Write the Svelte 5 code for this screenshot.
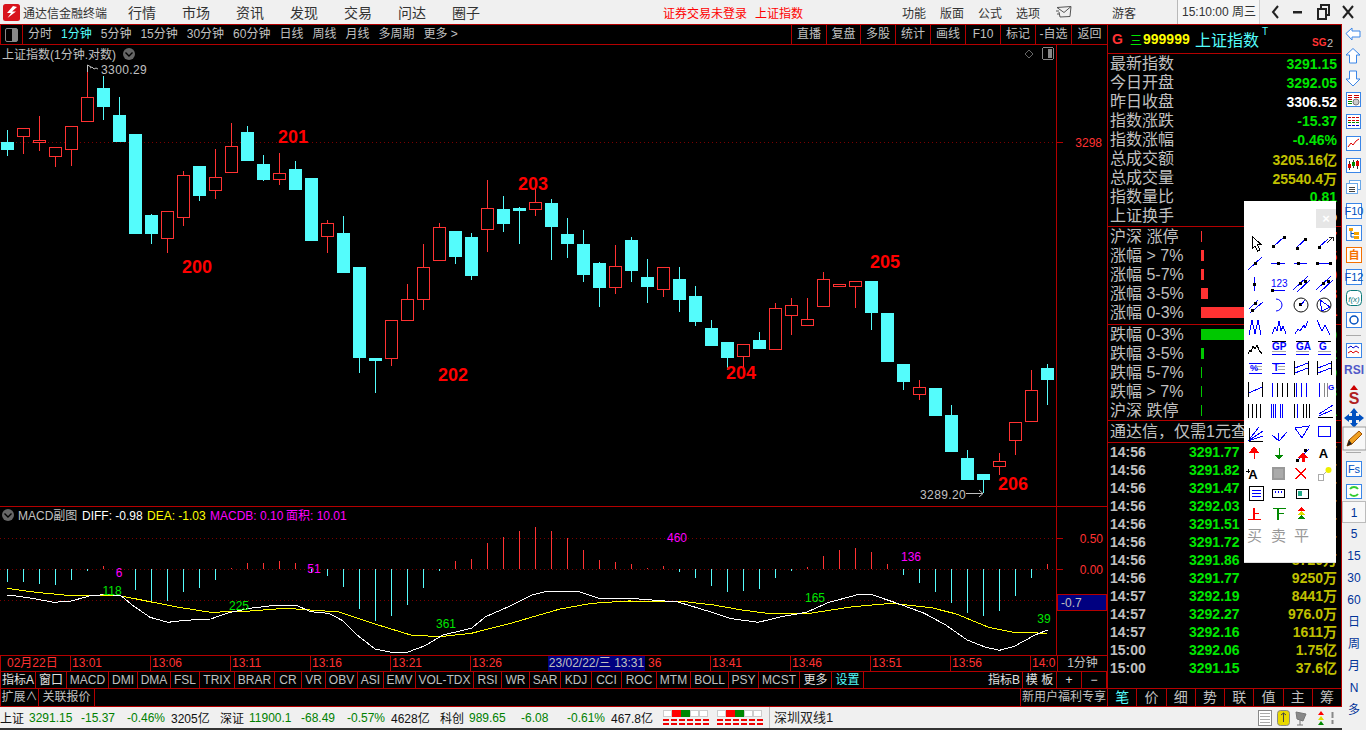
<script>
	const menus = ['行情', '市场', '资讯', '发现', '交易', '问达', '圈子'];
	const sysMenus = ['功能', '版面', '公式', '选项'];
	const periods = [
		['分时', 0], ['1分钟', 1], ['5分钟', 0], ['15分钟', 0], ['30分钟', 0], ['60分钟', 0],
		['日线', 0], ['周线', 0], ['月线', 0], ['多周期', 0], ['更多 >', 0]
	];
	const actions = [['直播', 35], ['复盘', 34], ['多股', 35], ['统计', 35], ['画线', 35], ['F10', 35], ['标记', 35], ['-自选', 36], ['返回', 36]];

	// [red?, wick high, body top, body bottom, wick low]
	const candles = [
		[0,130,142,150,156],[1,128,128,137,154],[1,116,140,143,151],[1,147,147,157,167],[1,126,126,150,166],
		[1,65,97,122,122],[0,76,88,107,120],[0,97,115,142,142],[0,134,134,234,234],[0,214,215,234,244],
		[1,211,211,239,253],[1,171,175,218,226],[0,166,166,196,201],[1,149,177,191,199],[1,123,146,173,173],
		[0,126,132,161,161],[0,155,164,180,181],[1,153,173,180,185],[0,161,169,190,190],[0,178,178,241,241],
		[1,220,223,237,253],[0,216,233,273,273],[0,267,267,358,373],[0,358,358,361,393],[1,320,320,359,366],
		[1,284,299,321,321],[1,244,267,300,310],[1,223,227,261,261],[0,231,231,257,264],[0,233,237,276,280],
		[1,180,208,230,252],[0,196,209,224,232],[0,207,208,211,244],[1,189,202,210,216],[0,199,203,227,260],
		[0,218,234,244,258],[0,230,244,275,282],[0,262,263,288,307],[1,245,266,288,294],[0,237,240,271,282],
		[0,259,277,287,303],[1,267,267,290,297],[0,267,279,300,312],[0,286,296,322,326],[0,320,328,346,346],
		[0,342,342,358,370],[1,344,344,357,370],[0,332,340,349,349],[1,303,308,350,350],[1,298,305,316,335],
		[1,298,319,326,326],[1,272,279,307,307],[1,284,284,287,287],[1,281,281,287,308],[0,281,281,313,330],
		[0,313,313,362,362],[0,364,364,382,390],[1,380,387,395,400],[0,388,388,416,416],[0,405,415,452,452],
		[0,450,458,480,480],[0,474,474,480,493],[1,453,461,467,475],[1,422,422,441,455],[1,370,390,422,422],
		[0,364,368,380,405]
	];

	// tip of each histogram bar, one per candle column
	const bars = [
		582,582,584,585,580,571,566,569,590,601,601,592,588,580,568,563,563,561,563,573,576,587,609,621,616,605,588,
		571,561,559,543,537,531,527,531,538,550,560,562,564,568,566,572,578,586,592,591,589,578,571,567,556,550,548,
		552,564,575,583,592,603,613,616,611,596,578,564
	];

	const fromZoomA = (p) => `${(p[0] / 2.8).toFixed(1)},${(500 + p[1] / 3).toFixed(1)}`;
	const fromZoomB = (p) => `${(560 + p[0] / 2.8).toFixed(1)},${(500 + p[1] / 3).toFixed(1)}`;
	const diff = [
		...[[20,286],[45,288],[90,295],[150,307],[200,303],[250,288],[300,283],[340,288],[370,315],[420,352],[470,367],[520,361],[590,357],[640,338],[700,325],[770,316],[830,316],[870,335],[920,340],[960,362],[1000,405],[1050,447],[1100,458],[1140,457],[1190,437],[1240,405],[1320,385],[1360,350],[1420,322],[1490,285],[1530,274]].map(fromZoomA),
		...[[0,274],[50,274],[110,295],[210,296],[330,306],[420,335],[480,356],[555,367],[620,350],[690,337],[750,308],[830,285],[870,283],[950,312],[1020,340],[1080,375],[1140,420],[1190,441],[1230,451],[1270,440],[1330,405],[1365,390]].map(fromZoomB)
	].join(' ');
	const dea = [
		...[[20,265],[100,277],[200,287],[340,288],[420,305],[500,322],[590,337],[700,333],[800,325],[950,336],[1050,372],[1150,405],[1230,410],[1320,400],[1430,370]].map(fromZoomA),
		...[[0,327],[90,310],[190,303],[340,304],[430,315],[510,330],[580,340],[700,340],[820,320],[930,310],[1040,323],[1110,342],[1200,382],[1270,397],[1365,400]].map(fromZoomB)
	].join(' ');

	const marks = [['200',197,273],['201',293,143],['202',453,381],['203',533,190],['204',741,379],['205',885,268],['206',1013,490]];
	const macdCounts = [['6',119,577,'m'],['51',314,573,'m'],['460',677,542,'m'],['136',911,561,'m'],['118',112,595,'g'],['225',239,610,'g'],['361',446,628,'g'],['165',815,602,'g'],['39',1044,623,'g']];

	const times = ['13:01','13:06','13:11','13:16','13:21','13:26','','36','13:41','13:46','13:51','13:56','14:0'];

	const tabsLeft = [
		['指标A',35,1],['窗口',31,1],['MACD',42],['DMI',29],['DMA',33],['FSL',29],['TRIX',35],['BRAR',40],['CR',27],['VR',24],
		['OBV',32],['ASI',26],['EMV',32],['VOL-TDX',58],['RSI',28],['WR',28],['SAR',31],['KDJ',31],['CCI',30],['ROC',35],
		['MTM',34],['BOLL',38],['PSY',30],['MCST',41],['更多',32,1]
	];

	const stats = [
		['最新指数','3291.15','g'],['今日开盘','3292.05','g'],['昨日收盘','3306.52','w'],['指数涨跌','-15.37','g'],['指数涨幅','-0.46%','g'],
		['总成交额','3205.16亿','y'],['总成交量','25540.4万','y'],['指数量比','0.81','g'],['上证换手','0.55%','w']
	];
	const rises = [['沪深 涨停',1,'7'],['涨幅 > 7%',3,'25'],['涨幅 5-7%',3,'30'],['涨幅 3-5%',7,'98'],['涨幅 0-3%',100,'914']];
	const falls = [['跌幅 0-3%',100,'3410'],['跌幅 3-5%',3,'62'],['跌幅 5-7%',1,'9'],['跌幅 > 7%',1,'3'],['沪深 跌停',1,'1']];
	const ticks = [
		['14:56','3291.77','9120万'],['14:56','3291.82','8830万'],['14:56','3291.47','7651万'],['14:56','3292.03','8120万'],['14:56','3291.51','6640万'],
		['14:56','3291.72','9032万'],['14:56','3291.86','8720万'],['14:56','3291.77','9250万'],['14:57','3292.19','8441万'],['14:57','3292.27','976.0万'],
		['14:57','3292.16','1611万'],['15:00','3292.06','1.75亿'],['15:00','3291.15','37.6亿']
	];
	const quoteTabs = ['笔','价','细','势','联','值','主','筹'];
	const railPeriods = ['1','5','15','30','60','日','周','月','N','多'];

	const market = [
		['上证','3291.15','-15.37','-0.46%','3205亿'],
		['深证','11900.1','-68.49','-0.57%','4628亿'],
		['科创','989.65','-6.08','-0.61%','467.8亿']
	];
</script>

<div class="app">
	<header class="title">
		<svg class="logo" width="17" height="17" viewBox="0 0 17 17">
			<rect width="17" height="17" rx="2.5" fill="#d8141c" />
			<path d="M10 2 L4 9 L8 9 L4.5 14 L13 7.5 L9 7.5 L14 3 Z" fill="#fff" />
		</svg>
		<span class="app-name">通达信金融终端</span>
		<nav class="menu">
			{#each menus as m}<span>{m}</span>{/each}
		</nav>
		<span class="notice">证券交易未登录</span>
		<span class="notice index">上证指数</span>
		<nav class="sys">
			{#each sysMenus as m}<span>{m}</span>{/each}
		</nav>
		<svg class="mail" width="16" height="12" viewBox="0 0 16 12">
			<path d="M1 1.5 L15 .5 L14 10.5 L4 11 L3 6 M1 1.5 L8 6.5 L15 .5 M0 5 H3 M1 8 H3" fill="none" stroke="#555" />
		</svg>
		<span class="guest">游客</span>
		<span class="clock">15:10:00 周三</span>
		<svg class="win" width="92" height="24" viewBox="0 0 92 24">
			<path d="M14 6 L9 12 L14 18" fill="none" stroke="#222" stroke-width="2" />
			<rect x="29" y="11" width="9" height="2.5" fill="#222" />
			<path d="M54 9 H62 V19 H54 Z M57 9 V5 H65 V15 H62" fill="none" stroke="#222" stroke-width="2" />
			<path d="M89 6 L79 18 M79 6 L89 18" fill="none" stroke="#222" stroke-width="2" />
		</svg>
	</header>

	<div class="work">
		<section class="left">
			<div class="toolbar">
				<div class="layout-btn"><i></i></div>
				<div class="periods">
					{#each periods as p}<span class:on={p[1]}>{p[0]}</span>{/each}
				</div>
				<div class="actions">
					{#each actions as a}<span style="width:{a[1]}px">{a[0]}</span>{/each}
				</div>
			</div>

			<svg class="chart" width="1107" height="461" viewBox="0 45 1107 461" shape-rendering="crispEdges">
				<line x1="0" x2="1057" y1="142.5" y2="142.5" class="dots" />
				<line x1="1056.5" x2="1056.5" y1="45" y2="506" class="frame" />
				<line x1="1057" x2="1063" y1="142.5" y2="142.5" class="frame" />
				{#each candles as c, i}
					{@const x = 7 + 16 * i}
					<line x1={x + 0.5} x2={x + 0.5} y1={c[1]} y2={c[4]} stroke={c[0] ? '#ff3232' : '#54fcfc'} />
					{#if c[0]}
						<rect x={x - 5.5} y={c[2] + 0.5} width="12" height={c[3] - c[2] - 1} fill="#000" stroke="#ff3232" />
					{:else}
						<rect x={x - 6} y={c[2]} width="13" height={c[3] - c[2]} fill="#54fcfc" />
					{/if}
				{/each}
				<text x="2" y="59" class="t-grey">上证指数(1分钟.对数)</text>
				<circle cx="129" cy="54" r="6" fill="#666" shape-rendering="auto" />
				<path d="M125.5 52.5 L129 56 L132.5 52.5" fill="none" stroke="#000" stroke-width="1.4" shape-rendering="auto" />
				<path d="M87.5 65 V72 M87.5 65 L91 67 M90 68 L92 67 L94 69 L96 68 L98 69" fill="none" stroke="#c0c0c0" shape-rendering="auto" />
				<text x="101" y="74" class="t-grey num">3300.29</text>
				<text x="920" y="499" class="t-grey num">3289.20</text>
				<path d="M966 493.5 H983 M979 490 L983 493.5 L979 497" fill="none" stroke="#c0c0c0" shape-rendering="auto" />
				{#each marks as m}
					<text x={m[1]} y={m[2]} class="mark" text-anchor="middle">{m[0]}</text>
				{/each}
				<path d="M1029 50 L1033 54 L1029 58 L1025 54 Z" fill="none" stroke="#666" shape-rendering="auto" />
				<rect x="1042.5" y="47.5" width="11" height="12" rx="2" fill="#000" stroke="#888" />
				<rect x="1048" y="49" width="4" height="9" fill="#888" />
				<text x="1102" y="147" class="t-red" text-anchor="end">3298</text>
			</svg>

			<svg class="macd" width="1107" height="148" viewBox="0 507 1107 148" shape-rendering="crispEdges">
				<line x1="0" x2="1057" y1="538.5" y2="538.5" class="dots" />
				<line x1="0" x2="1057" y1="569.5" y2="569.5" class="dots" />
				<line x1="0" x2="1057" y1="600.5" y2="600.5" class="dots" />
				{#each bars as tip, i}
					{@const x = 7.5 + 16 * i}
					<line x1={x} x2={x} y1="569" y2={tip} stroke={tip < 569 ? '#ff3232' : '#54fcfc'} />
				{/each}
				<polyline points={dea} class="dea" />
				<polyline points={diff} class="diff" />
				{#each macdCounts as c}
					<text x={c[1]} y={c[2]} class="count {c[3]}" text-anchor="middle">{c[0]}</text>
				{/each}
				<circle cx="8" cy="515" r="6" fill="#666" shape-rendering="auto" />
				<path d="M4.5 513.5 L8 517 L11.5 513.5" fill="none" stroke="#000" stroke-width="1.4" shape-rendering="auto" />
				<text x="18" y="520" class="t-grey">MACD副图</text>
				<text x="82" y="520" class="t-white">DIFF: -0.98</text>
				<text x="147" y="520" class="t-yellow">DEA: -1.03</text>
				<text x="210" y="520" class="t-magenta">MACDB: 0.10</text>
				<text x="286" y="520" class="t-magenta">面积: 10.01</text>
				<rect x="1056" y="507" width="51" height="148" fill="#000" />
				<line x1="1056.5" x2="1056.5" y1="507" y2="655" class="frame" />
				<line x1="1057" x2="1063" y1="538.5" y2="538.5" class="frame" />
				<line x1="1057" x2="1063" y1="569.5" y2="569.5" class="frame" />
				<text x="1103" y="543" class="t-red" text-anchor="end">0.50</text>
				<text x="1103" y="574" class="t-red" text-anchor="end">0.00</text>
				<rect x="1057" y="594.5" width="49" height="16" fill="#000080" stroke="#b40000" />
				<text x="1061" y="607" class="t-grey">-0.7</text>
			</svg>

			<div class="axis">
				<span class="date">02月22日</span>
				{#each times as t}<span class="time" class:tail={t === '36'}>{t}</span>{/each}
				<span class="stamp">23/02/22/三 13:31</span>
				<span class="unit">1分钟</span>
			</div>

			<div class="tabs">
				{#each tabsLeft as t}<span class:bright={t[2]} style="width:{t[1]}px">{t[0]}</span>{/each}
				<span class="cyan" style="width:32px">设置</span>
				<span class="grow"></span>
				<span class="bright" style="width:37px">指标B</span>
				<span class="bright" style="width:34px">模 板</span>
				<span class="bright" style="width:25px">+</span>
				<span class="bright" style="width:25px">−</span>
			</div>

			<div class="extra">
				<span style="width:38px">扩展∧</span>
				<span style="width:56px">关联报价</span>
				<span class="grow"></span>
				<span class="promo">新用户福利专享</span>
			</div>
		</section>

		<section class="quote">
			<div class="q-head">
				<span class="g">G</span>
				<span class="bars">三</span>
				<span class="code">999999</span>
				<span class="name">上证指数</span>
				<sup>T</sup>
				<span class="sg">SG</span>
				<span class="two">2</span>
			</div>
			<div class="q-block first">
				{#each stats as s}
					<div class="row"><span class="label">{s[0]}</span><b class={s[2]}>{s[1]}</b></div>
				{/each}
			</div>
			<div class="q-block rises">
				{#each rises as r}
					<div class="row meter"><span class="label">{r[0]}</span><i class="up" style="width:{r[1]}px"></i><b class="r">{r[2]}</b></div>
				{/each}
			</div>
			<div class="q-block">
				{#each falls as r}
					<div class="row meter"><span class="label">{r[0]}</span><i class="down" style="width:{r[1]}px"></i><b class="g">{r[2]}</b></div>
				{/each}
			</div>
			<div class="news">通达信，仅需1元查看主力资金</div>
			<div class="ticks">
				{#each ticks as t}
					<div class="tick"><b class="when">{t[0]}</b><b class="price">{t[1]}</b><b class="vol">{t[2]}</b></div>
				{/each}
			</div>
			<div class="q-tabs">
				{#each quoteTabs as t, i}<span class:cyan={i === 0}>{t}</span>{/each}
			</div>

			<div class="palette">
				<div class="close">×</div>
				<svg width="92" height="361" viewBox="1244 201 92 361" shape-rendering="crispEdges">
					<g class="k w"><path d="M1252 236 V249 L1255 246 L1257.5 251 L1260 250 L1257.5 245 L1261 244.5 Z" /></g>
					<g class="b">
						<path d="M1273 247 L1284 237 M1296 248 L1307 238 M1319 247 L1328 239" />
						<path d="M1248 270 L1262 257 M1271 263 H1285 M1294 263 H1307 M1317 263 H1331" />
						<path d="M1254 277 V291 M1272 290 H1285" />
						<path d="M1293 290 L1308 276 M1297 292 L1310 280" />
						<path d="M1316 290 L1331 276 M1320 292 L1333 280" />
						<path d="M1250 313 L1263 302 M1249 309 L1258 300" />
						<path d="M1276 299 A6 6 0 0 1 1276 311" shape-rendering="auto" />
						<path d="M1249 335 L1252 320 L1255 334 L1258 320 L1261 335" />
						<path d="M1272 334 L1275 327 L1277 331 L1279 321 L1281 331 L1283 326 L1286 334" />
						<path d="M1295 334 L1298 329 L1300 331 L1304 325 L1305 328 L1308 321" />
						<path d="M1317 320 L1322 331 L1325 325 L1330 335" />
						<path d="M1249 363.5 H1262 M1249 373.5 H1262 M1272 363.5 H1285 M1272 373.5 H1285" />
						<path d="M1272 354.5 H1286 M1296 354.5 H1309 M1318 354.5 H1331" />
						<path d="M1295 368 L1308 363 M1295 373 L1308 368 M1318 368 L1331 363 M1318 373 L1331 368" />
						<path d="M1249 393 L1262 387 M1272.5 383 V397 M1296 383 V397 M1301 383 V397 M1306 383 V397 M1319 383 V397" />
						<path d="M1271.5 404 V418 M1273.5 404 V418 M1275.5 404 V418 M1280 404 V418 M1282 404 V418 M1297 404 V418 M1319 414 L1333 405 M1319 416 L1332 410" />
						<path d="M1248 441 L1259 427 M1248 441 L1263 431 M1248 441 L1263 436" />
						<path d="M1279 433 L1278 441 M1279 441 L1272 435 M1279 441 L1287 432" />
						<path d="M1295 428 L1309 426 L1302 438 Z" />
						<rect x="1318.5" y="426.5" width="12" height="10" />
						<path d="M1296 462 L1309 449" />
						<path d="M1252 490.5 H1261 M1252 493.5 H1261 M1252 496.5 H1261" />
					</g>
					<g class="k">
						<path d="M1294 361 V375 M1308 361 V375 M1317 361 V375 M1331 361 V375" />
						<path d="M1248.5 382 V397 M1262.5 382 V397 M1277 383 V397 M1282 383 V397 M1287 383 V397 M1294 383 V397" />
						<path d="M1248 404 V418 M1252 404 V418 M1256 404 V418 M1260 404 V418" />
						<path d="M1294 404 V418 M1303 404 V418 M1306 404 V418 M1309 404 V418 M1318 417 H1333" />
						<path d="M1249 428 V441 H1263" />
						<path d="M1248 354 L1250 350 L1251 352 L1253 346 L1255 349 L1257 345 L1259 350 L1262 354" />
						<path d="M1272 341.5 H1286 M1296 341.5 H1309 M1318 341.5 H1331" />
						<rect x="1249.5" y="486.5" width="14" height="14" />
						<rect x="1272.5" y="489.5" width="12" height="8" />
						<path d="M1275 491 V493 M1278 491 V493 M1281 491 V493" stroke="#00f" />
						<rect x="1296.5" y="489.5" width="12" height="9" />
					</g>
					<g class="dot">
						<rect x="1272" y="245" width="3" height="3" /><rect x="1283" y="236" width="3" height="3" />
						<rect x="1296" y="247" width="3" height="3" /><rect x="1304" y="238" width="3" height="3" />
						<rect x="1318" y="246" width="3" height="3" />
						<rect x="1254" y="262" width="3" height="3" /><rect x="1277" y="262" width="3" height="3" />
						<rect x="1297" y="262" width="3" height="3" /><rect x="1316" y="262" width="3" height="3" /><rect x="1329" y="262" width="3" height="3" />
						<rect x="1252.5" y="283" width="3" height="3" /><rect x="1271" y="289" width="3" height="3" />
						<rect x="1299" y="282" width="3" height="3" /><rect x="1304" y="280" width="3" height="3" />
						<rect x="1322" y="282" width="3" height="3" /><rect x="1327" y="280" width="3" height="3" />
						<rect x="1251" y="309" width="3" height="3" /><rect x="1254" y="302" width="3" height="3" />
						<rect x="1299" y="303" width="3" height="3" />
						<rect x="1304" y="449" width="3" height="3" /><rect x="1296" y="459" width="3" height="3" />
					</g>
					<path d="M1329 237 H1333 V241 M1332 238 L1327 243" fill="none" stroke="#222" />
					<circle cx="1301" cy="305" r="7" fill="none" stroke="#111" shape-rendering="auto" />
					<path d="M1301 305 L1305 300" stroke="#00f" />
					<circle cx="1324" cy="305" r="7" fill="none" stroke="#111" shape-rendering="auto" />
					<path d="M1320 300 L1330 307 L1322 311 Z" fill="none" stroke="#00f" />
					<text x="1271" y="287" class="ico blue">123</text>
					<text x="1272" y="350" class="ico blue bold">GP</text>
					<text x="1296" y="350" class="ico blue bold">GA</text>
					<text x="1319" y="350" class="ico blue bold">G</text>
					<path d="M1272 351.5 H1286 M1296 351.5 H1309 M1318 351.5 H1331" stroke="#aaa" />
					<path d="M1256 366.5 H1262 M1256 369.5 H1262 M1278 366.5 H1285 M1278 369.5 H1285" stroke="#aaa" />
					<text x="1250" y="371" class="ico blue bold" style="font-size:9px">%</text>
					<text x="1273" y="371" class="ico blue bold">T</text>
					<path d="M1324 383 V397 M1327 383 V397" stroke="#888" />
					<text x="1328" y="390" class="ico blue bold" style="font-size:8px">G</text>
					<path d="M1254 447 V459 M1250 452 L1254 447 L1258 452 Z" fill="#f00" stroke="#f00" />
					<path d="M1279 448 V459 M1275 455 L1279 459 L1283 455 Z" fill="#080" stroke="#080" />
					<path d="M1303 453 L1307 457 H1299 Z M1302 457 H1304 V461 H1302 Z" fill="#f00" stroke="#f00" />
					<text x="1323.5" y="458" class="ico bold big" text-anchor="middle">A</text>
					<text x="1253" y="479" class="ico bold big" text-anchor="middle">A</text>
					<path d="M1246 471 H1250 M1248 469 V473" stroke="#000" />
					<rect x="1272.5" y="467.5" width="11" height="11" fill="#aaa" stroke="#999" stroke-width="2" />
					<path d="M1296 468 L1306 479 M1306 468 L1296 479" stroke="#f00" stroke-width="1.4" />
					<rect x="1318.5" y="474.5" width="5" height="6" fill="none" stroke="#aaa" />
					<path d="M1324 474 L1329 469" stroke="#aaa" />
					<circle cx="1328.5" cy="470" r="3" fill="#ee0" shape-rendering="auto" />
					<rect x="1298" y="491" width="4" height="5" fill="#2a8" />
					<path d="M1248 519.5 H1261 M1254 508 V519 M1254 513.5 H1259" fill="none" stroke="#f00" stroke-width="1.4" />
					<path d="M1273 508.5 H1286 M1278 508 V520 M1278 513.5 H1284" fill="none" stroke="#080" stroke-width="1.4" />
					<path d="M1301 507 L1305 511 H1297 Z" fill="#f00" />
					<path d="M1301 511 L1305 515 H1297 Z" fill="#dd0" />
					<path d="M1301 515 L1305 519 H1297 Z" fill="#080" />
					<text x="1254.5" y="541" class="glyph" fill="#999" text-anchor="middle">买</text>
					<text x="1278.5" y="541" class="glyph" fill="#999" text-anchor="middle">卖</text>
					<text x="1301.5" y="541" class="glyph" fill="#999" text-anchor="middle">平</text>
				</svg>
			</div>
		</section>
	</div>

	<aside class="rail">
		<svg width="24" height="477" viewBox="1342 24 24 477">
			<g class="r-b">
				<path d="M1346 33.5 L1352 28 V31 H1360 V37 H1352 V40 Z" fill="#fff" />
				<path d="M1353 48.5 L1360 55 H1356.5 V63 H1349.5 V55 H1346 Z" fill="#fff" />
				<path d="M1353 86 L1360 79 H1356.5 V71 H1349.5 V79 H1346 Z" fill="#fff" />
				<rect x="1346.5" y="92.5" width="14" height="14" fill="#fff" />
				<rect x="1346.5" y="114.5" width="14" height="14" fill="#fff" />
				<rect x="1346.5" y="136.5" width="14" height="14" fill="#fff" />
				<rect x="1346.5" y="158.5" width="14" height="14" fill="#fff" />
				<rect x="1346.5" y="203.5" width="15" height="15" fill="#fff" />
				<rect x="1346.5" y="225.5" width="15" height="15" fill="#fff" />
				<rect x="1346.5" y="269.5" width="15" height="15" fill="#fff" />
				<rect x="1346.5" y="312.5" width="15" height="15" fill="#fff" />
				<circle cx="1354" cy="320" r="4" fill="none" stroke="#0050c0" stroke-width="1.5" />
				<rect x="1346.5" y="343.5" width="15" height="14" fill="#fff" />
				<rect x="1346.5" y="461.5" width="15" height="15" fill="#fff" stroke="#0050c0" />
				<rect x="1346.5" y="484.5" width="15" height="14" fill="#fff" />
			</g>
			<path d="M1348 95.5 H1352 M1348 97.5 H1352 M1348 99.5 H1352 M1354 95.5 H1359 M1354 97.5 H1359" stroke="#c00" />
			<path d="M1348 101.5 H1352 M1348 103.5 H1352" stroke="#080" />
			<circle cx="1356" cy="102" r="3" fill="#ccc" stroke="#777" />
			<path d="M1348 117.5 H1351 M1348 120.5 H1351 M1352 117.5 H1355 M1352 120.5 H1355 M1356 117.5 H1359 M1356 120.5 H1359" stroke="#c00" />
			<path d="M1348 122.5 H1351 M1352 122.5 H1355 M1356 122.5 H1359" stroke="#080" />
			<path d="M1348 125.5 H1351 M1352 125.5 H1355 M1356 125.5 H1359" stroke="#00c" />
			<path d="M1348 147 L1351 143 L1353 145 L1356 141 L1359 139" fill="none" stroke="#d00" />
			<path d="M1349.5 161 V170 M1353.5 160 V168 M1357.5 160 V169" stroke="#333" />
			<rect x="1348" y="164" width="3" height="4" fill="#d00" /><rect x="1352" y="162" width="3" height="4" fill="#080" /><rect x="1356" y="161" width="3" height="5" fill="#d00" />
			<rect x="1349.5" y="180.5" width="11" height="9" fill="#fff" stroke="#6aa8e8" />
			<rect x="1346.5" y="183.5" width="11" height="10" fill="#fff" stroke="#6aa8e8" />
			<path d="M1349 187.5 H1355 M1349 189.5 H1355 M1349 191.5 H1355" stroke="#444" />
			<text x="1354" y="215" class="r-t" text-anchor="middle">F10</text>
			<rect x="1349" y="228" width="4" height="3" fill="#f5a300" /><rect x="1354" y="232" width="5" height="3" fill="#f5a300" /><rect x="1354" y="236" width="5" height="3" fill="#f5a300" />
			<path d="M1351 231 V237 H1354 M1351 233.5 H1354" fill="none" stroke="#0050c0" />
			<rect x="1346.5" y="247.5" width="15" height="15" fill="#fff" stroke="#f57000" />
			<text x="1354" y="259" class="r-o" text-anchor="middle">自</text>
			<text x="1354" y="281" class="r-t" text-anchor="middle">F12</text>
			<rect x="1346.5" y="290.5" width="15" height="15" rx="4" fill="#fff" stroke="#0a7a7a" />
			<text x="1354" y="302" class="r-f" text-anchor="middle">f(x)</text>
			<rect x="1346" y="335" width="15" height="1" fill="#aaa" />
			<path d="M1348 348 L1351 346 L1353 348 L1356 346 L1359 348" fill="none" stroke="#00c" />
			<path d="M1348 353 L1351 351 L1353 353 L1356 351 L1359 353" fill="none" stroke="#d00" />
			<text x="1354" y="374" class="r-rsi" text-anchor="middle">RSI</text>
			<text x="1354" y="404" class="r-s" text-anchor="middle">S</text>
			<path d="M1354 385 L1358 390 H1350 Z" fill="#c00" />
			<path d="M1354 408 L1358 413 H1356 V416 H1359 V414 L1364 418 L1359 422 V420 H1356 V423 H1358 L1354 428 L1350 423 H1352 V420 H1349 V422 L1344 418 L1349 414 V416 H1352 V413 H1350 Z" fill="#0050c0" />
			<rect x="1343" y="427" width="23" height="23" fill="#f8f8f8" stroke="#999" />
			<path d="M1347 446 L1349 440 L1359 431 L1362 434 L1352 444 Z" fill="#f0a020" stroke="#a05000" />
			<path d="M1347 446 L1349 440 L1352 444 Z" fill="#222" />
			<rect x="1346" y="452" width="15" height="1" fill="#aaa" />
			<text x="1354" y="473" class="r-t" text-anchor="middle">Fs</text>
			<path d="M1350 489 A5 5 0 0 1 1358 489 M1358 494 A5 5 0 0 1 1350 494" fill="none" stroke="#3c3" stroke-width="2" />
		</svg>
		<div class="r-periods">
			{#each railPeriods as p, i}<span class:picked={i === 0}>{p}</span>{/each}
		</div>
	</aside>

	<footer class="status">
		{#each market as m}
			<span class="m-name">{m[0]}</span>
			<span class="m-val">{m[1]}</span>
			<span class="m-val wide">{m[2]}</span>
			<span class="m-val wider">{m[3]}</span>
			<span class="m-amt">{m[4]}</span>
		{/each}
		<svg class="lights" width="105" height="17" viewBox="0 0 105 17" shape-rendering="crispEdges">
			{#each [0, 1] as g}
				<g transform="translate({g * 54} 0)">
					<rect x=".5" y="1.5" width="8" height="6" fill="#fff" stroke="#ccc" />
					<rect x="9" y="1" width="9" height="7" fill="#f00" />
					<rect x="18" y="1" width="9" height="7" fill="#080" />
					<rect x="27.5" y="1.5" width="8" height="6" fill="#fff" stroke="#ccc" />
					<rect x="36.5" y="1.5" width="8" height="6" fill="#fff" stroke="#ccc" />
					{#each [0, 1, 2, 3, 4, 5] as n}
						<rect x={n * 8} y="10" width="6" height="2" fill="#e00" />
						<rect x={n * 8} y="14" width="6" height="2" fill="#e00" />
					{/each}
				</g>
			{/each}
		</svg>
		<span class="line-name">深圳双线1</span>
		<svg class="s-icons" width="80" height="18" viewBox="0 0 80 18">
			<rect x=".5" y="1.5" width="13" height="15" fill="#fff" stroke="#888" />
			<path d="M2 4.5 H12 M2 7.5 H12 M2 10.5 H12 M2 13.5 H12" stroke="#aaa" />
			<rect x="19.5" y="1.5" width="12" height="15" rx="3" fill="#e8d800" stroke="#888" />
			<path d="M25.5 4 V13 M23 6 L25.5 4 L28 6" fill="none" stroke="#444" />
			<path d="M38 3 L48 5 L45 12 L39 10 Z M42 11 V16 M39 16 H45" fill="#888" stroke="#777" />
			<path d="M63 2 L66 6 H60 Z" fill="#f00" /><path d="M63 7 L66 11 H60 Z" fill="#dd0" /><path d="M63 12 L66 16 H60 Z" fill="#080" />
			<path d="M74.5 3 V15" stroke="#888" stroke-width="2" stroke-dasharray="6 2" />
		</svg>
	</footer>
</div>

<style>
	:global(body) {
		margin: 0;
		background: #000;
	}

	.app {
		width: 1366px;
		height: 730px;
		overflow: hidden;
		display: grid;
		grid-template-columns: 1342px 24px;
		grid-template-rows: 24px 683px 23px;
		font-family: "Liberation Sans", "Noto Sans CJK SC", sans-serif;
		font-size: 12px;
		color: #c0c0c0;
		background: #000;
	}

	svg {
		display: block;
		flex: none;
	}

	/* title bar */
	.title {
		grid-column: 1 / 3;
		display: flex;
		align-items: center;
		background: #f0f0f0;
		color: #333;
	}

	.logo {
		margin-left: 3px;
	}

	.app-name {
		margin-left: 3px;
		width: 84px;
		font-size: 12px;
	}

	.menu {
		display: flex;
		gap: 26px;
		margin-left: 21px;
		font-size: 14px;
		width: 372px;
	}

	.notice {
		color: #f00;
		margin-left: 163px;
		width: 85px;
	}

	.notice.index {
		margin-left: 7px;
		width: 48px;
	}

	.sys {
		display: flex;
		gap: 14px;
		margin-left: 99px;
		width: 146px;
	}

	.mail {
		margin-left: 8px;
	}

	.guest {
		margin-left: 40px;
		width: 24px;
	}

	.clock {
		margin-left: 41px;
		width: 83px;
		padding-left: 4px;
		height: 24px;
		line-height: 24px;
		box-sizing: border-box;
		border-left: 1px solid #b8b8b8;
		border-right: 1px solid #d0d0d0;
		background: #f6f6f6;
		font-size: 12px;
		white-space: nowrap;
	}

	.win {
		margin-left: 4px;
	}

	.work {
		display: grid;
		grid-template-columns: 1108px 234px;
		min-height: 0;
	}

	.left {
		display: flex;
		flex-direction: column;
		border-right: 1px solid #b40000;
		border-top: 1px solid #b40000;
		box-sizing: border-box;
		min-width: 0;
	}

	/* period strip */
	.toolbar {
		display: flex;
		height: 19px;
		border-bottom: 1px solid #b40000;
		border-left: 1px solid #b40000;
		line-height: 19px;
		flex: none;
	}

	.layout-btn {
		width: 21px;
		border-right: 1px solid #b40000;
		flex: none;
	}

	.layout-btn i {
		display: block;
		width: 11px;
		height: 12px;
		margin: 3px 0 0 4px;
		border: 1px solid #888;
		border-radius: 2px;
		background: linear-gradient(90deg, #000 55%, #888 55%);
	}

	.periods {
		display: flex;
		gap: 9px;
		padding-left: 5px;
	}

	.periods span {
		white-space: nowrap;
	}

	.periods .on {
		color: #54fcfc;
	}

	.actions {
		margin-left: auto;
		display: flex;
	}

	.actions span {
		box-sizing: border-box;
		text-align: center;
		border-left: 1px solid #b40000;
	}

	.chart,
	.macd {
		border-bottom: 1px solid #b40000;
		box-sizing: content-box;
	}

	.dots {
		stroke: #7a0000;
		stroke-dasharray: 1 3;
	}

	.frame {
		stroke: #b40000;
	}

	.chart text,
	.macd text {
		font-size: 12px;
	}

	.t-grey {
		fill: #c0c0c0;
	}

	.num {
		letter-spacing: .4px;
	}

	.t-red {
		fill: #ff3232;
	}

	.t-white {
		fill: #fff;
	}

	.t-yellow {
		fill: #ff0;
	}

	.t-magenta {
		fill: #f0f;
	}

	.chart .mark {
		fill: #f00;
		font-size: 18px;
		font-weight: 700;
	}

	.dea {
		fill: none;
		stroke: #ff0;
	}

	.diff {
		fill: none;
		stroke: #fff;
	}

	.count.m {
		fill: #f0f;
	}

	.count.g {
		fill: #00e600;
	}

	/* time axis */
	.axis {
		display: flex;
		height: 15px;
		line-height: 15px;
		border-bottom: 1px solid #b40000;
		color: #ff3232;
		position: relative;
		flex: none;
		border-left: 1px solid #b40000;
	}

	.date {
		width: 69px;
		padding-left: 6px;
		box-sizing: border-box;
		flex: none;
	}

	.time {
		width: 80px;
		flex: none;
		box-sizing: border-box;
		padding-left: 1px;
		border-left: 1px solid #b40000;
		overflow: hidden;
	}

	.time.tail {
		padding-left: 17px;
	}

	.time:nth-last-of-type(3) {
		width: 27px;
	}

	.stamp {
		position: absolute;
		left: 547px;
		top: 0;
		width: 97px;
		background: #000080;
		color: #c0c0c0;
		text-align: center;
		white-space: nowrap;
	}

	.unit {
		width: 50px;
		flex: none;
		box-sizing: border-box;
		border-left: 1px solid #b40000;
		text-align: center;
		color: #c0c0c0;
	}

	/* indicator tabs */
	.tabs {
		display: flex;
		height: 16px;
		line-height: 16px;
		border-bottom: 1px solid #b40000;
		border-left: 1px solid #b40000;
		flex: none;
	}

	.tabs span {
		box-sizing: border-box;
		text-align: center;
		border-right: 1px solid #b40000;
		white-space: nowrap;
		flex: none;
		overflow: hidden;
	}

	.tabs .grow,
	.extra .grow {
		flex: 1;
		border-right: 0;
	}

	.bright {
		color: #e0e0e0;
	}

	.cyan {
		color: #54fcfc;
	}

	.extra {
		display: flex;
		height: 17px;
		line-height: 17px;
		border-bottom: 1px solid #b40000;
		border-left: 1px solid #b40000;
		flex: none;
	}

	.extra span {
		box-sizing: border-box;
		border-right: 1px solid #b40000;
		text-align: center;
		flex: none;
		white-space: nowrap;
	}

	.extra .promo {
		width: 87px;
		border-right: 0;
		border-left: 1px solid #b40000;
	}

	/* quote column */
	.quote {
		position: relative;
		display: flex;
		flex-direction: column;
		border-top: 1px solid #b40000;
		border-right: 1px solid #b40000;
		box-sizing: border-box;
		min-width: 0;
		overflow: hidden;
	}

	.q-head {
		height: 28px;
		flex: none;
		display: flex;
		align-items: center;
		border-bottom: 1px solid #b40000;
		padding-left: 4px;
		white-space: nowrap;
	}

	.q-head .g {
		color: #ff3232;
		font-weight: 700;
		font-size: 14px;
		width: 18px;
	}

	.q-head .bars {
		color: #00e600;
		width: 13px;
		font-size: 12px;
	}

	.code {
		color: #ff0;
		font: 700 14px "Liberation Sans", sans-serif;
		width: 52px;
	}

	.name {
		color: #54fcfc;
		font-size: 16px;
		width: 67px;
	}

	sup {
		color: #54fcfc;
		font-size: 10px;
		align-self: flex-start;
		margin-top: 1px;
		line-height: 12px;
		width: 50px;
	}

	.sg {
		color: #ff3232;
		font: 700 10px "Liberation Sans", sans-serif;
		margin-top: 7px;
		width: 15px;
	}

	.two {
		margin-top: 7px;
		font-size: 11px;
	}

	.q-block {
		flex: none;
		border-bottom: 1px solid #b40000;
		padding-left: 2px;
		height: 96px;
		box-sizing: border-box;
	}

	.q-block.first {
		height: 173px;
	}

	.q-block.rises {
		height: 98px;
	}

	.row {
		display: flex;
		align-items: center;
		height: 19px;
		white-space: nowrap;
	}

	.label {
		font-size: 16px;
		line-height: 19px;
	}

	.row b {
		margin-left: auto;
		margin-right: 4px;
		font-size: 14px;
	}

	.row .g,
	.price {
		color: #00e600;
	}

	.row .w {
		color: #fff;
	}

	.row .y,
	.vol {
		color: #c0c000;
	}

	.row .r {
		color: #ff3232;
	}

	.meter .label {
		width: 91px;
		flex: none;
	}

	.meter i {
		height: 11px;
		display: block;
		flex: none;
	}

	.meter .up {
		background: #ff3232;
	}

	.meter .down {
		background: #00c800;
	}

	.news {
		height: 21px;
		line-height: 21px;
		font-size: 16px;
		padding-left: 2px;
		border-bottom: 1px solid #b40000;
		white-space: nowrap;
		flex: none;
	}

	.ticks {
		height: 245px;
		flex: none;
	}

	.tick {
		display: flex;
		height: 18px;
		line-height: 18px;
		font-size: 14px;
		white-space: nowrap;
	}

	.when {
		width: 81px;
		padding-left: 2px;
		box-sizing: border-box;
		color: #c0c0c0;
	}

	.price {
		width: 56px;
	}

	.vol {
		margin-left: auto;
		margin-right: 4px;
	}

	.q-tabs {
		display: flex;
		height: 19px;
		flex: none;
		border-top: 1px solid #b40000;
		border-bottom: 1px solid #b40000;
		line-height: 17px;
		font-size: 14px;
		box-sizing: border-box;
	}

	.q-tabs span {
		flex: 1;
		text-align: center;
		border-right: 1px solid #b40000;
	}

	.q-tabs span:last-child {
		border-right: 0;
	}

	/* drawing tools palette */
	.palette {
		position: absolute;
		left: 136px;
		top: 176px;
		width: 92px;
		height: 361px;
		background: #fff;
		border-bottom: 1px solid #ddd;
	}

	.close {
		position: absolute;
		right: 0;
		top: 8px;
		width: 20px;
		height: 19px;
		background: #e6e6e6;
		color: #fff;
		text-align: center;
		line-height: 19px;
		font-size: 13px;
		font-weight: 700;
	}

	.b {
		stroke: #00f;
		fill: none;
	}

	.k {
		stroke: #000;
		fill: none;
	}

	.k.w {
		fill: #fff;
	}

	.dot {
		fill: #000;
	}

	.ico {
		font-size: 10px;
	}

	.ico.blue {
		fill: #00f;
	}

	.ico.bold {
		font-weight: 700;
	}

	.ico.big {
		font-size: 13px;
	}

	.glyph {
		font-size: 15px;
	}

	/* right rail */
	.rail {
		grid-column: 2;
		grid-row: 2 / 4;
		background: #f0f0f0;
		display: flex;
		flex-direction: column;
		overflow: hidden;
	}

	.r-b rect,
	.r-b path {
		stroke: #3a86e8;
	}

	.r-t {
		fill: #0050c0;
		font-size: 11px;
		font-family: "Liberation Sans", sans-serif;
	}

	.r-o {
		fill: #f57000;
		font-size: 11px;
		font-weight: 700;
	}

	.r-f {
		fill: #0a7a7a;
		font-size: 8px;
		font-style: italic;
	}

	.r-rsi {
		fill: #5058c8;
		font-size: 12px;
		font-weight: 700;
	}

	.r-s {
		fill: #b02020;
		font-size: 16px;
		font-weight: 700;
	}

	.r-periods {
		display: flex;
		flex-direction: column;
	}

	.r-periods span {
		height: 22px;
		line-height: 22px;
		text-align: center;
		color: #003399;
		font-size: 12px;
		box-sizing: border-box;
	}

	.r-periods .picked {
		background: #f8f8f8;
		border: 1px solid #bbb;
	}

	/* status bar */
	.status {
		grid-column: 1;
		grid-row: 3;
		background: #f0f0f0;
		border-bottom: 2px solid #333;
		box-sizing: border-box;
		display: flex;
		align-items: center;
		color: #111;
		white-space: nowrap;
	}

	.m-name {
		width: 29px;
		flex: none;
	}

	.m-val {
		color: #008000;
		width: 52px;
		flex: none;
	}

	.m-val.wide {
		width: 46px;
	}

	.m-val.wider {
		width: 44px;
	}

	.m-amt {
		width: 49px;
		flex: none;
	}

	.lights {
		margin-left: 3px;
	}

	.line-name {
		margin-left: 1px;
		padding-left: 4px;
		border-left: 1px solid #bbb;
		line-height: 21px;
		color: #222;
		font-size: 13px;
	}

	.s-icons {
		margin-left: auto;
		margin-right: 4px;
	}
</style>
